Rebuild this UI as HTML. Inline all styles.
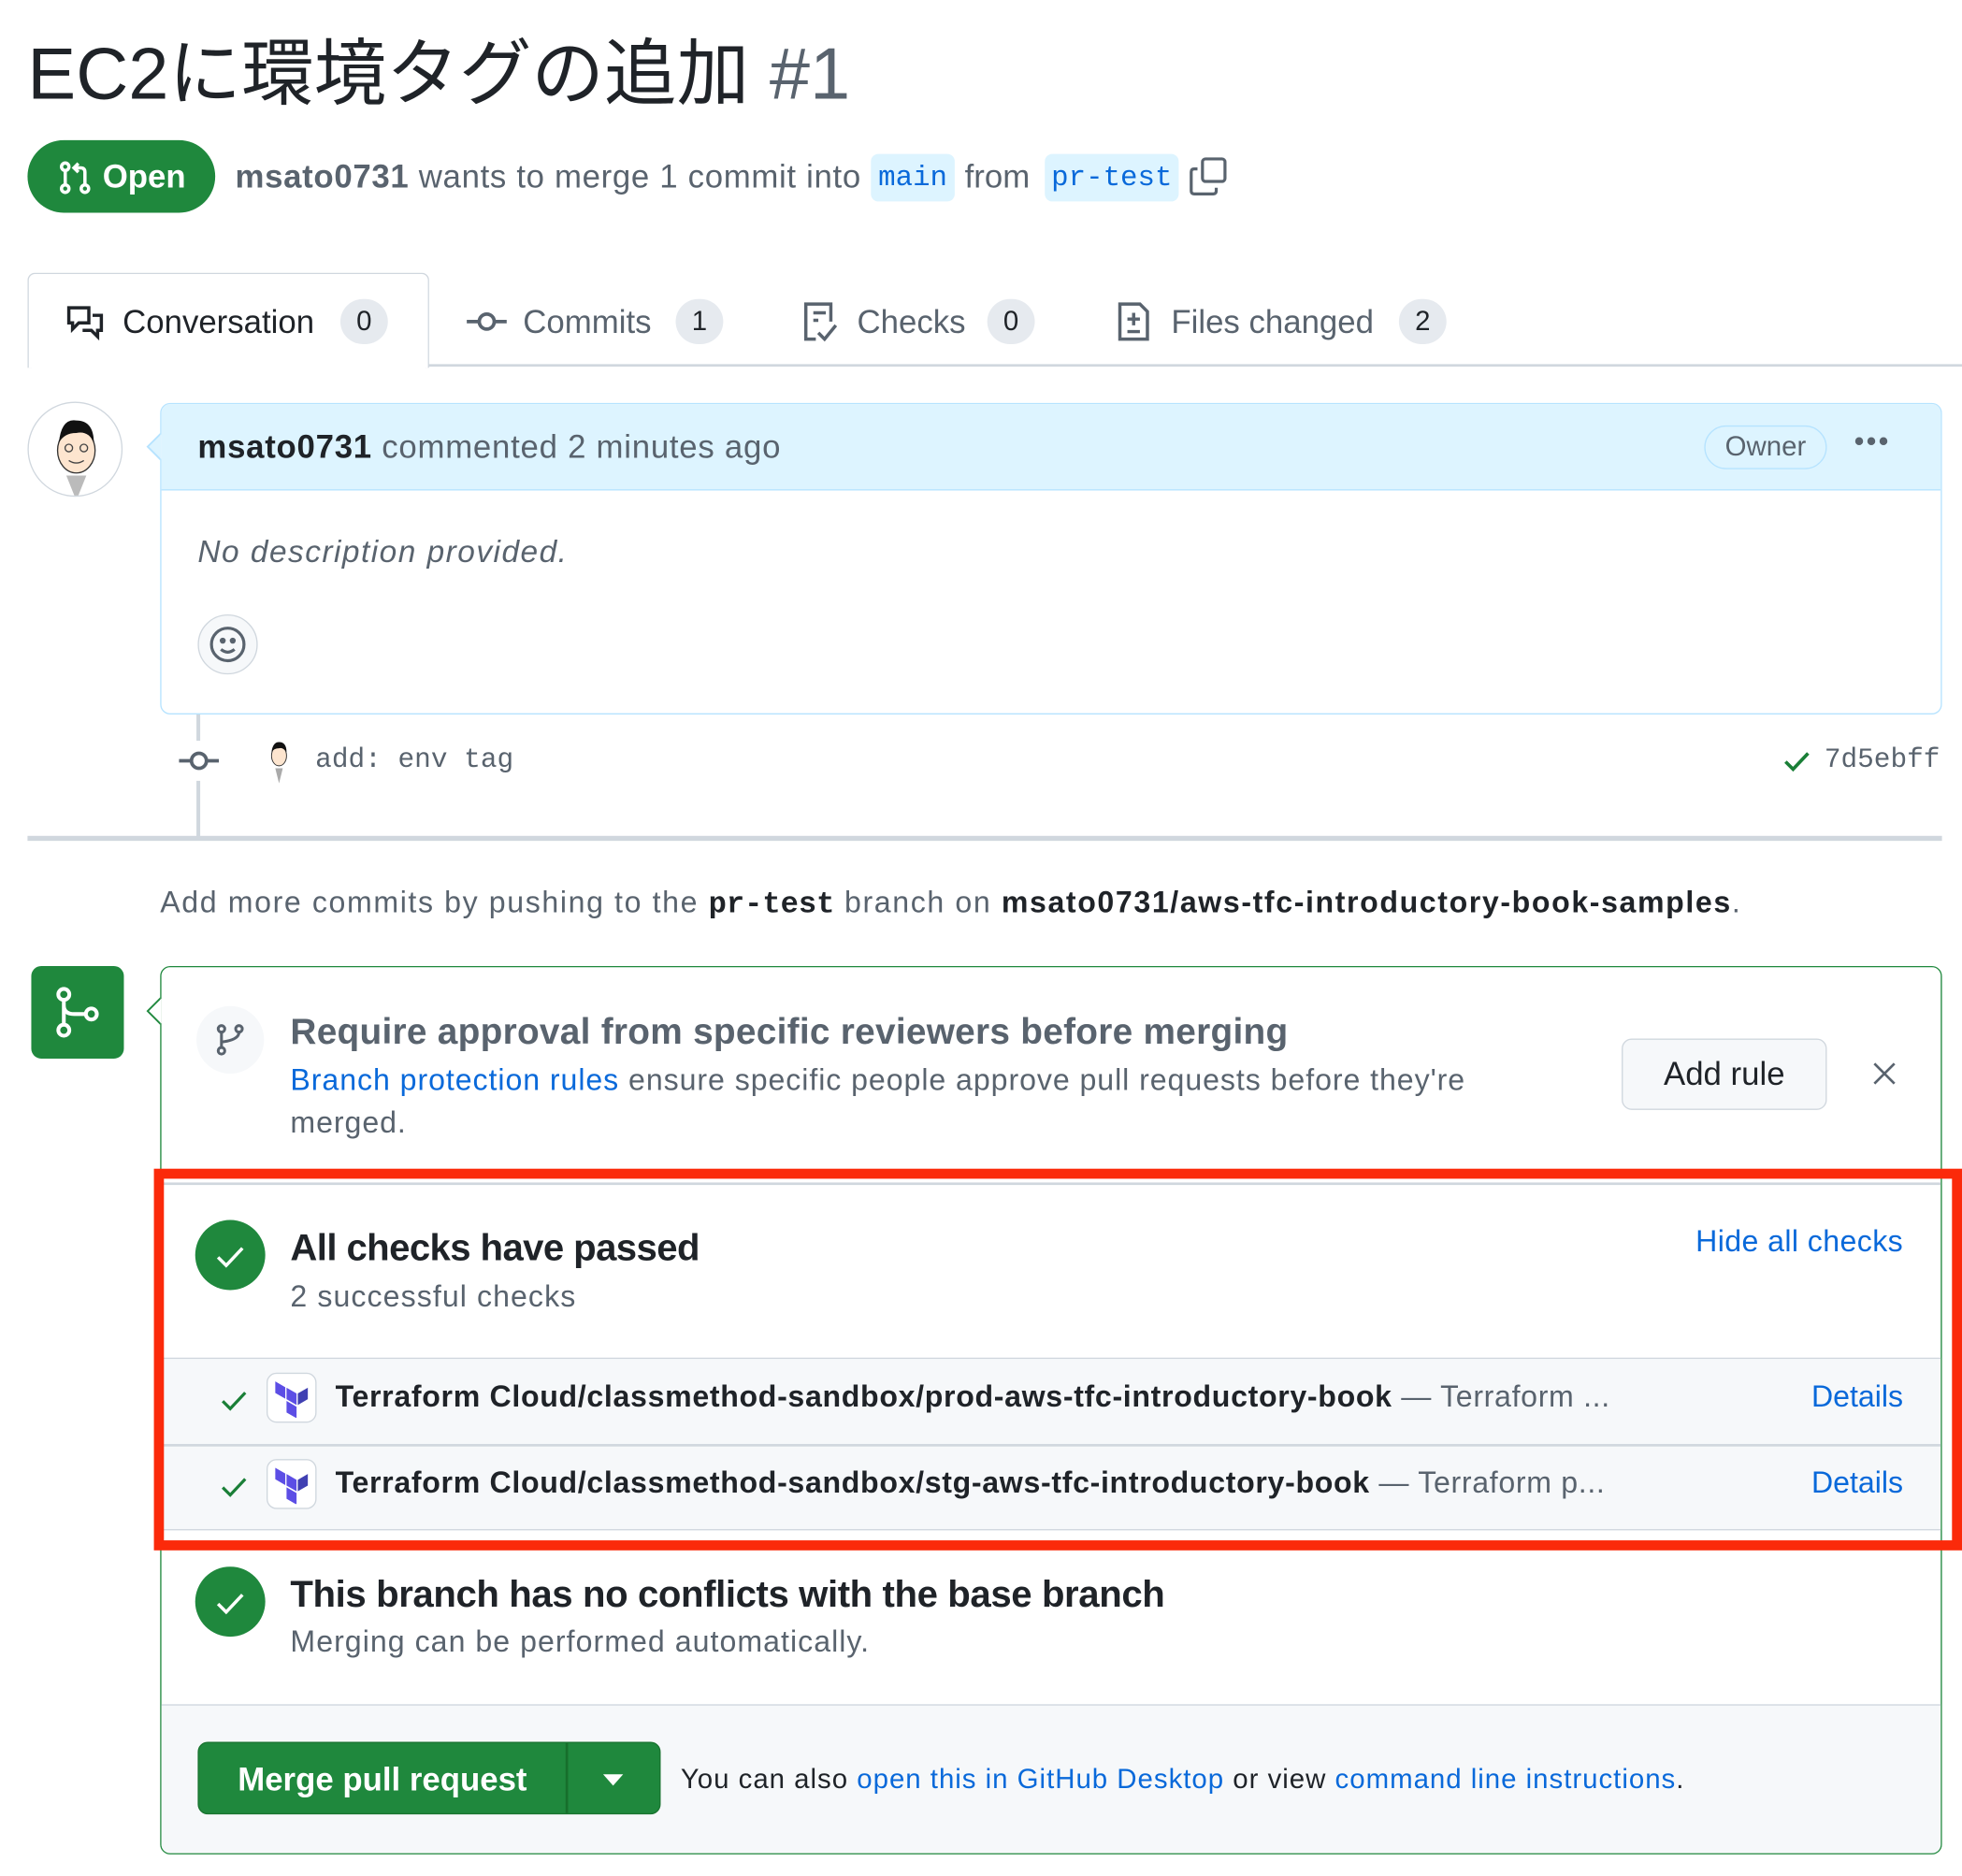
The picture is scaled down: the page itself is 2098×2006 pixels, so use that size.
<!DOCTYPE html>
<html><head><meta charset="utf-8"><style>
*{box-sizing:border-box;margin:0;padding:0}
html,body{width:2098px;height:2006px;overflow:hidden;background:#fff}
#w{position:absolute;left:0;top:0;width:1568px;height:1499px;transform:scale(1.33801);transform-origin:0 0;font-family:"Liberation Sans","Noto Sans CJK JP",sans-serif;color:#1f2328}
.a{position:absolute;white-space:nowrap}
.mono{font-family:"Liberation Mono","DejaVu Sans Mono",monospace}
.g{color:#59636e}.b{color:#0969da}
.pill{position:absolute;background:#e6eaef;border-radius:20px;height:36px;font-size:22px;line-height:36px;text-align:center;color:#1f2328}
.chk{position:absolute;width:56px;height:56px;border-radius:50%;background:#1f883d}
</style></head><body><div id="w">
<div class="a" style="left:22px;top:24px;font-size:58px;line-height:72px;">EC2に環境タグの追加 <span class="g">#1</span></div>
<div class="a" style="left:22px;top:112px;width:150px;height:58px;border-radius:29px;background:#1f883d;color:#fff;font-size:26px;font-weight:bold;line-height:58px;padding-left:60px">Open</div>
<svg class="a" style="left:46px;top:128px" width="28" height="28" viewBox="0 0 16 16" fill="none" stroke="#fff" stroke-width="1.5"><circle cx="3.5" cy="3" r="1.7"/><circle cx="3.5" cy="13" r="1.7"/><circle cx="12.5" cy="13" r="1.7"/><path d="M3.5 5v6M12.5 11V5.5Q12.5 3.5 10.5 3.5H8M9.5 1.5L7.5 3.5 9.5 5.5"/></svg>
<div class="a g" style="left:188px;top:124px;font-size:26px;line-height:34px;letter-spacing:0.5px"><b style="color:#59636e">msato0731</b> wants to merge 1 commit into</div>
<div class="a mono b" style="left:696px;top:123px;width:67px;height:38px;background:#ddf4ff;border-radius:6px;font-size:23px;line-height:38px;text-align:center">main</div>
<div class="a g" style="left:771px;top:124px;font-size:26px;line-height:34px">from</div>
<div class="a mono b" style="left:835px;top:123px;width:107px;height:38px;background:#ddf4ff;border-radius:6px;font-size:23px;line-height:38px;text-align:center">pr-test</div>
<svg class="a" style="left:950px;top:125px" width="32" height="32" viewBox="0 0 16 16" fill="none" stroke="#59636e" stroke-width="1.2"><rect x="5.5" y="1" width="9" height="9" rx="1.2"/><path d="M3.5 5H2.2Q1 5 1 6.2V13.8Q1 15 2.2 15H9.8Q11 15 11 13.8V12.5"/></svg>

<div class="a" style="left:342px;top:291px;width:1226px;height:2px;background:#d0d7de"></div>
<div class="a" style="left:22px;top:218px;width:321px;height:76px;border:1.5px solid #d0d7de;border-bottom:none;border-radius:6px 6px 0 0;background:#fff"></div>
<svg class="a" style="left:52px;top:241px" width="32" height="32" viewBox="0 0 16 16" fill="none" stroke="#1f2328" stroke-width="1.3"><path d="M1.5 2.5h8v6h-4l-2.5 2.5V8.5H1.5zM11 5.5h3.5v6h-1.5v2.5L10.5 11.5H7"/></svg>
<div class="a" style="left:98px;top:240px;font-size:26px;line-height:34px">Conversation</div>
<div class="pill" style="left:272px;top:239px;width:38px">0</div>
<svg class="a" style="left:373px;top:243px" width="32" height="28" viewBox="0 0 16 14" fill="none" stroke="#59636e" stroke-width="1.4"><circle cx="8" cy="7" r="3"/><path d="M0 7h5M11 7h5"/></svg>
<div class="a g" style="left:418px;top:240px;font-size:26px;line-height:34px">Commits</div>
<div class="pill" style="left:540px;top:239px;width:38px">1</div>
<svg class="a" style="left:640px;top:240px" width="32" height="34" viewBox="0 0 16 17" fill="none" stroke="#59636e" stroke-width="1.3"><path d="M6 15.5H2V1.5h10v7M5 5h5M5 8h2M7 13l2.5 2.5L14 10"/></svg>
<div class="a g" style="left:685px;top:240px;font-size:26px;line-height:34px">Checks</div>
<div class="pill" style="left:789px;top:239px;width:38px">0</div>
<svg class="a" style="left:892px;top:240px" width="28" height="34" viewBox="0 0 14 17" fill="none" stroke="#59636e" stroke-width="1.3"><path d="M1.5 1.5h8l3 3v11h-11zM7 5v5M4.5 7.5h5M4.5 12.5h5"/></svg>
<div class="a g" style="left:936px;top:240px;font-size:26px;line-height:34px">Files changed</div>
<div class="pill" style="left:1118px;top:239px;width:38px">2</div>

<div class="a" style="left:22px;top:321px;width:76px;height:76px;border-radius:50%;border:1.5px solid #d0d7de;background:#fff;overflow:hidden">
<svg width="76" height="76" viewBox="0 0 76 76"><ellipse cx="38" cy="38" rx="15" ry="18" fill="#fde5cf" stroke="#333" stroke-width="1"/><path d="M24 32Q26 12 38 14Q52 14 52 32Q48 22 38 24Q28 24 24 32z" fill="#111"/><path d="M30 58l8 20 8-20z" fill="#bbb"/><circle cx="32" cy="36" r="3" fill="none" stroke="#444"/><circle cx="44" cy="36" r="3" fill="none" stroke="#444"/><path d="M32 46q6 4 12 0" stroke="#444" fill="none"/></svg></div>
<div class="a" style="left:128px;top:322px;width:1424px;height:249px;border:1.5px solid #b6e3ff;border-radius:8px;overflow:hidden">
<div style="height:69px;background:#ddf4ff;border-bottom:1.5px solid #b6e3ff"></div></div>
<div class="a" style="left:117px;top:346px;width:0;height:0;border:11px solid transparent;border-right-color:#b6e3ff;border-left:none"></div>
<div class="a" style="left:119px;top:347px;width:0;height:0;border:10px solid transparent;border-right-color:#ddf4ff;border-left:none"></div>
<div class="a g" style="left:158px;top:340px;font-size:26px;line-height:34px;letter-spacing:0.55px"><b style="color:#1f2328">msato0731</b> commented 2 minutes ago</div>
<div class="a g" style="left:1362px;top:340px;width:98px;height:35px;border:1.5px solid #b6e3ff;border-radius:18px;font-size:22px;line-height:32px;text-align:center">Owner</div>
<div class="a g" style="left:1482px;top:340px;font-size:22px;letter-spacing:2px;font-weight:bold">•••</div>
<div class="a g" style="left:158px;top:425px;font-size:25px;font-style:italic;line-height:32px;letter-spacing:1.1px">No description provided.</div>
<div class="a" style="left:158px;top:491px;width:48px;height:48px;border-radius:50%;border:1.5px solid #d0d7de;background:#f6f8fa"></div>
<svg class="a" style="left:166px;top:499px" width="32" height="32" viewBox="0 0 16 16" fill="none" stroke="#59636e" stroke-width="1.2"><circle cx="8" cy="8" r="6.5"/><path d="M5.3 10q2.7 2.2 5.4 0"/><circle cx="6" cy="6.5" r=".6" fill="#59636e"/><circle cx="10" cy="6.5" r=".6" fill="#59636e"/></svg>

<div class="a" style="left:157px;top:571px;width:3px;height:98px;background:#d0d7de"></div>
<div class="a" style="left:143px;top:592px;width:32px;height:32px;background:#fff"></div>
<svg class="a" style="left:143px;top:598px" width="32" height="20" viewBox="0 0 16 10" fill="none" stroke="#59636e" stroke-width="1.4"><circle cx="8" cy="5" r="3"/><path d="M0 5h5M11 5h5"/></svg>
<svg class="a" style="left:210px;top:590px" width="26" height="36" viewBox="0 0 26 36"><ellipse cx="13" cy="14" rx="6" ry="8" fill="#fde5cf" stroke="#333" stroke-width=".7"/><path d="M7 11Q8 3 13 3Q19 3 19 11Q16 7 13 8Q9 8 7 11z" fill="#111"/><path d="M10 24l3 12 3-12z" fill="#aaa"/></svg>
<div class="a mono g" style="left:252px;top:594px;font-size:22px;line-height:28px">add: env tag</div>
<svg class="a" style="left:1424px;top:596px" width="24" height="24" viewBox="0 0 16 16" fill="none" stroke="#1a7f37" stroke-width="1.8"><path d="M2 8.5l4 4 8-8.5"/></svg>
<div class="a mono g" style="left:1458px;top:594px;font-size:22px;line-height:28px">7d5ebff</div>
<div class="a" style="left:22px;top:668px;width:1530px;height:4px;background:#d0d7de"></div>
<div class="a g" style="left:128px;top:706px;font-size:24px;line-height:32px;letter-spacing:1.2px">Add more commits by pushing to the <b class="mono" style="color:#1f2328;letter-spacing:0">pr-test</b> branch on <b style="color:#1f2328">msato0731/aws-tfc-introductory-book-samples</b>.</div>

<div class="a" style="left:25px;top:772px;width:74px;height:74px;border-radius:8px;background:#1f883d"></div>
<svg class="a" style="left:40px;top:787px" width="44" height="44" viewBox="0 0 16 16" fill="none" stroke="#fff" stroke-width="1.1"><circle cx="4" cy="2.8" r="1.6"/><circle cx="4" cy="13.2" r="1.6"/><circle cx="12" cy="8.5" r="1.6"/><path d="M4 4.4v7.2M4 6Q4 8.5 7 8.5h3.4"/></svg>
<div class="a" style="left:128px;top:772px;width:1424px;height:710px;border:1.5px solid #1f883d;border-radius:8px;overflow:hidden;background:#fff">
<div style="position:absolute;left:0;right:0;top:589px;bottom:0;background:#f6f8fa;border-top:1.5px solid #d0d7de"></div>
<div style="position:absolute;left:0;right:0;top:312px;height:138px;background:#f6f8fa;border-top:1.5px solid #d0d7de;border-bottom:1.5px solid #d0d7de"></div>
<div style="position:absolute;left:0;right:0;top:381px;height:1.5px;background:#d0d7de"></div>
<div style="position:absolute;left:0;right:0;top:172px;height:1.5px;background:#d0d7de"></div>
</div>
<div class="a" style="left:117px;top:797px;width:0;height:0;border:11px solid transparent;border-right-color:#1f883d;border-left:none"></div>
<div class="a" style="left:119px;top:798px;width:0;height:0;border:10px solid transparent;border-right-color:#fff;border-left:none"></div>

<div class="a" style="left:157px;top:804px;width:54px;height:54px;border-radius:50%;background:#f6f8fa"></div>
<svg class="a" style="left:170px;top:816px" width="28" height="30" viewBox="0 0 16 16" fill="none" stroke="#59636e" stroke-width="1.3"><circle cx="4" cy="3" r="1.5"/><circle cx="4" cy="13" r="1.5"/><circle cx="12" cy="3" r="1.5"/><path d="M4 4.5v7M12 4.5Q12 8 4 9"/></svg>
<div class="a g" style="left:232px;top:806px;font-size:29px;font-weight:bold;line-height:38px;letter-spacing:0.2px">Require approval from specific reviewers before merging</div>
<div class="a g" style="left:232px;top:848px;font-size:24px;line-height:32px;letter-spacing:0.7px"><span class="b">Branch protection rules</span> ensure specific people approve pull requests before they're</div>
<div class="a g" style="left:232px;top:882px;font-size:24px;line-height:32px;letter-spacing:0.7px">merged.</div>
<div class="a" style="left:1296px;top:830px;width:164px;height:57px;border:1.5px solid #d0d7de;border-radius:8px;background:#f6f8fa;font-size:26px;line-height:54px;text-align:center">Add rule</div>
<svg class="a" style="left:1496px;top:848px" width="20" height="20" viewBox="0 0 10 10" stroke="#59636e" stroke-width="1"><path d="M1 1l8 8M9 1L1 9"/></svg>

<div class="chk" style="left:156px;top:975px"></div>
<svg class="a" style="left:171px;top:991px" width="26" height="26" viewBox="0 0 16 16" fill="none" stroke="#fff" stroke-width="1.6"><path d="M2 8.5l4 4 8-8.5"/></svg>
<div class="a" style="left:232px;top:979px;font-size:30px;font-weight:bold;line-height:38px;letter-spacing:-0.45px">All checks have passed</div>
<div class="a g" style="left:232px;top:1021px;font-size:24px;line-height:32px;letter-spacing:0.8px">2 successful checks</div>
<div class="a b" style="right:47px;top:977px;font-size:24px;line-height:32px;letter-spacing:0.3px">Hide all checks</div>

<svg class="a" style="left:175px;top:1107px" width="24" height="24" viewBox="0 0 16 16" fill="none" stroke="#1a7f37" stroke-width="1.6"><path d="M2 8.5l4 4 8-8.5"/></svg>
<div class="a" style="left:213px;top:1097px;width:40px;height:40px;border-radius:8px;border:1.5px solid #d0d7de;background:#fff"></div>
<svg class="a" style="left:217px;top:1101px" width="32" height="32" viewBox="0 0 32 32"><path d="M12 8l8 4.6v9.2l-8-4.6z" fill="#5c4ee5"/><path d="M21 12.6l8-4.6v9.2l-8 4.6z" fill="#4040b2"/><path d="M3 3l8 4.6v9.2L3 12.2zM12 18.6l8 4.6v9.2l-8-4.6z" fill="#5c4ee5"/></svg>
<div class="a" style="left:268px;top:1101px;font-size:24px;font-weight:bold;line-height:32px;letter-spacing:0.5px">Terraform Cloud/classmethod-sandbox/prod-aws-tfc-introductory-book <span class="g" style="font-weight:normal">— Terraform ...</span></div>
<div class="a b" style="right:47px;top:1101px;font-size:24px;line-height:32px">Details</div>

<svg class="a" style="left:175px;top:1176px" width="24" height="24" viewBox="0 0 16 16" fill="none" stroke="#1a7f37" stroke-width="1.6"><path d="M2 8.5l4 4 8-8.5"/></svg>
<div class="a" style="left:213px;top:1166px;width:40px;height:40px;border-radius:8px;border:1.5px solid #d0d7de;background:#fff"></div>
<svg class="a" style="left:217px;top:1170px" width="32" height="32" viewBox="0 0 32 32"><path d="M12 8l8 4.6v9.2l-8-4.6z" fill="#5c4ee5"/><path d="M21 12.6l8-4.6v9.2l-8 4.6z" fill="#4040b2"/><path d="M3 3l8 4.6v9.2L3 12.2zM12 18.6l8 4.6v9.2l-8-4.6z" fill="#5c4ee5"/></svg>
<div class="a" style="left:268px;top:1170px;font-size:24px;font-weight:bold;line-height:32px;letter-spacing:0.5px">Terraform Cloud/classmethod-sandbox/stg-aws-tfc-introductory-book <span class="g" style="font-weight:normal">— Terraform p...</span></div>
<div class="a b" style="right:47px;top:1170px;font-size:24px;line-height:32px">Details</div>

<div class="a" style="left:123px;top:934px;width:1445px;height:305px;border:8px solid #fb2a0a"></div>

<div class="chk" style="left:156px;top:1252px"></div>
<svg class="a" style="left:171px;top:1268px" width="26" height="26" viewBox="0 0 16 16" fill="none" stroke="#fff" stroke-width="1.6"><path d="M2 8.5l4 4 8-8.5"/></svg>
<div class="a" style="left:232px;top:1256px;font-size:30px;font-weight:bold;line-height:38px;letter-spacing:-0.3px">This branch has no conflicts with the base branch</div>
<div class="a g" style="left:232px;top:1297px;font-size:24px;line-height:32px;letter-spacing:0.77px">Merging can be performed automatically.</div>

<div class="a" style="left:158px;top:1392px;width:370px;height:58px;border-radius:8px;background:#1f883d;border:1px solid #1a7430"></div>
<div class="a" style="left:452px;top:1393px;width:1.5px;height:56px;background:#176f2c"></div>
<div class="a" style="left:190px;top:1405px;font-size:26px;font-weight:bold;color:#fff;line-height:34px">Merge pull request</div>
<div class="a" style="left:482px;top:1418px;width:0;height:0;border-left:8px solid transparent;border-right:8px solid transparent;border-top:9px solid #fff"></div>
<div class="a" style="left:544px;top:1407px;font-size:22px;line-height:30px;letter-spacing:0.73px">You can also <span class="b">open this in GitHub Desktop</span> or view <span class="b">command line instructions</span>.</div>
</div></body></html>
